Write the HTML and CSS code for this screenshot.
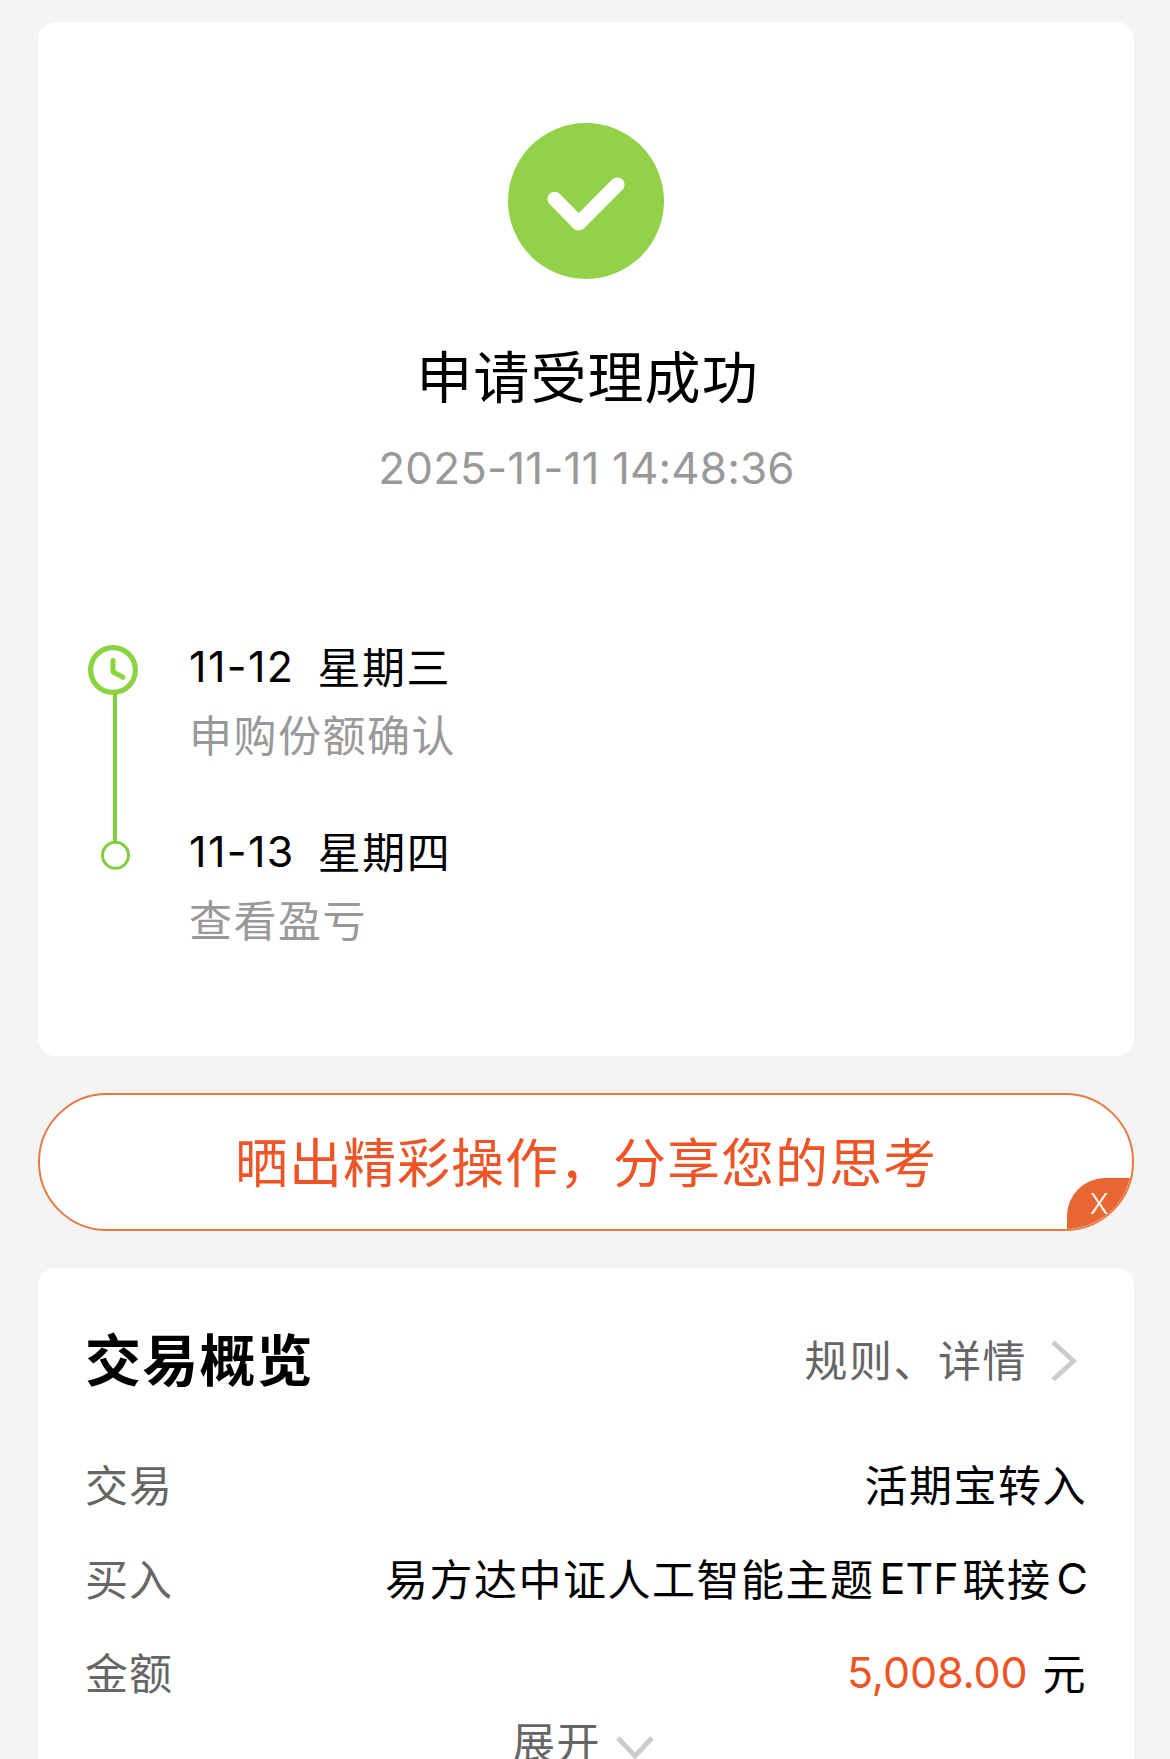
FILE: index.html
```html
<!DOCTYPE html>
<html lang="zh-CN">
<head>
<meta charset="utf-8">
<title>申请受理成功</title>
<link rel="stylesheet" href="styles.css">
</head>
<body>
<main class="page">
  <section class="card result">
    <svg class="result-icon" viewBox="0 0 156 156" width="156" height="156">
      <circle cx="78" cy="78" r="78" fill="#92d148"/>
      <path d="M46.7 76 L70.7 100.3 L109.3 61.7" fill="none" stroke="#fff" stroke-width="14.5" stroke-linecap="round" stroke-linejoin="round"/>
    </svg>
    <h1 class="result-title">申请受理成功</h1>
    <time class="result-time">2025-11-11 14:48:36</time>
    <div class="timeline">
      <svg class="rail" viewBox="0 0 50 226" width="50" height="226" fill="none">
        <path d="M27 49V197" stroke="#7fce3d" stroke-width="4"/>
        <circle cx="25" cy="25" r="22.4" stroke="#8ad53f" stroke-width="5.2"/>
        <path d="M25 15.5V27L35 32.3" stroke="#8ad53f" stroke-width="5" stroke-linecap="round" stroke-linejoin="round"/>
        <circle cx="27.5" cy="210.3" r="13" stroke="#7fce3d" stroke-width="3"/>
      </svg>
      <ol class="steps">
        <li>
          <div class="step-day"><span class="step-date">11-12</span>星期三</div>
          <div class="step-note">申购份额确认</div>
        </li>
        <li>
          <div class="step-day"><span class="step-date">11-13</span>星期四</div>
          <div class="step-note">查看盈亏</div>
        </li>
      </ol>
    </div>
  </section>

  <section class="share">
    <span class="share-text">晒出精彩操作，分享您的思考</span>
    <span class="share-close">X</span>
  </section>

  <section class="card overview">
    <header class="overview-head">
      <h2 class="overview-title">交易概览</h2>
      <a class="overview-link"><span>规则、详情</span>
        <svg viewBox="0 0 28 44" width="28" height="44" fill="none"><path d="M3 3.3L23.5 22L3 40.7" stroke="#ccc" stroke-width="4.8"/></svg>
      </a>
    </header>
    <dl class="rows">
      <div class="row"><dt>交易</dt><dd>活期宝转入</dd></div>
      <div class="row"><dt>买入</dt><dd>易方达中证人工智能主题<span class="latin">ETF</span>联接<span class="latin">C</span></dd></div>
      <div class="row"><dt>金额</dt><dd><span class="amount">5,008.00</span>元</dd></div>
    </dl>
    <div class="expand"><span>展开</span>
      <svg viewBox="0 0 40 24" width="40" height="24" fill="none"><path d="M3 3L20 21L37 3" stroke="#ccc" stroke-width="4.8"/></svg>
    </div>
  </section>
</main>
</body>
</html>
```
FILE: styles.css
```css
* { box-sizing: border-box; }

html, body { height: 1759px; overflow: hidden; }

body {
  margin: 0;
  background: #f4f4f4;
  color: #000;
  font-family: Inter, "Noto Sans CJK SC", sans-serif;
  font-size: 43px;
  letter-spacing: 1.5px;
  white-space: nowrap;
}

h1, h2, dl, dd, ol { margin: 0; padding: 0; }
ol { list-style: none; }
svg { display: block; flex: none; }

.page {
  display: flex;
  flex-direction: column;
  gap: 37px;
  padding: 22px 36px 0 38px;
}

.card { background: #fff; border-radius: 18px; }

/* result */
.result {
  display: flex;
  flex-direction: column;
  align-items: center;
  height: 1034px;
  padding: 101px 50px 0;
}

.result-title {
  margin-top: 69px;
  font-size: 56px;
  font-weight: 400;
  line-height: 60px;
  letter-spacing: 1.1px;
  padding-left: 3px;
}

.result-time {
  margin-top: 35px;
  color: #999;
  font-size: 44px;
  line-height: 50px;
  letter-spacing: 0.1px;
  padding-left: 1px;
}

.timeline {
  display: flex;
  align-self: stretch;
  gap: 51px;
  margin-top: 139px;
}

.rail { margin-top: 13px; }

.steps {
  display: flex;
  flex-direction: column;
  gap: 49px;
  padding-top: 2px;
  line-height: 68px;
}

.step-date { margin-right: 23px; letter-spacing: 1.4px; vertical-align: 2px; line-height: 1; }
.step-note { color: #999; }

/* share banner */
.share {
  position: relative;
  display: flex;
  justify-content: center;
  height: 138px;
  overflow: hidden;
  background: #fff;
  border: 2px solid #e87844;
  border-radius: 69px;
}

.share-text {
  color: #ee5426;
  font-size: 53px;
  line-height: 138px;
  letter-spacing: 1px;
}

.share-close {
  position: absolute;
  right: -2px;
  bottom: -2px;
  width: 67px;
  height: 53px;
  padding-left: 23px;
  background: #e86632;
  border-top-left-radius: 38px;
  color: #fff;
  font-size: 28px;
  font-weight: 300;
  line-height: 52px;
}

/* overview */
.overview { height: 600px; padding: 54px 47px 0 47px; }

.overview-head {
  display: flex;
  justify-content: space-between;
  align-items: center;
  height: 76px;
}

.overview-title {
  padding-top: 2px;
  font-size: 56px;
  font-weight: 700;
  line-height: 72px;
  letter-spacing: 1.2px;
}

.overview-link {
  display: flex;
  align-items: center;
  gap: 23px;
  padding-right: 9px;
  color: #666;
}
.overview-link span { padding-bottom: 4px; }
.overview-link svg { margin-top: 1px; }

.rows { padding-top: 41px; line-height: 94px; }

.row { display: flex; justify-content: space-between; }
.row dt { color: #666; letter-spacing: 1px; }
.latin { margin: 0 4px 0 5px; letter-spacing: 0; vertical-align: 2px; line-height: 1; }
.latin:last-child { margin-right: -1px; }
.amount { margin-right: 15px; color: #ee5426; letter-spacing: -0.15px; vertical-align: 2px; line-height: 1; }

.expand {
  display: flex;
  justify-content: center;
  align-items: center;
  gap: 14px;
  padding-right: 5px;
  color: #666;
  line-height: 44px;
}
.expand svg { margin-top: 7px; }
```
